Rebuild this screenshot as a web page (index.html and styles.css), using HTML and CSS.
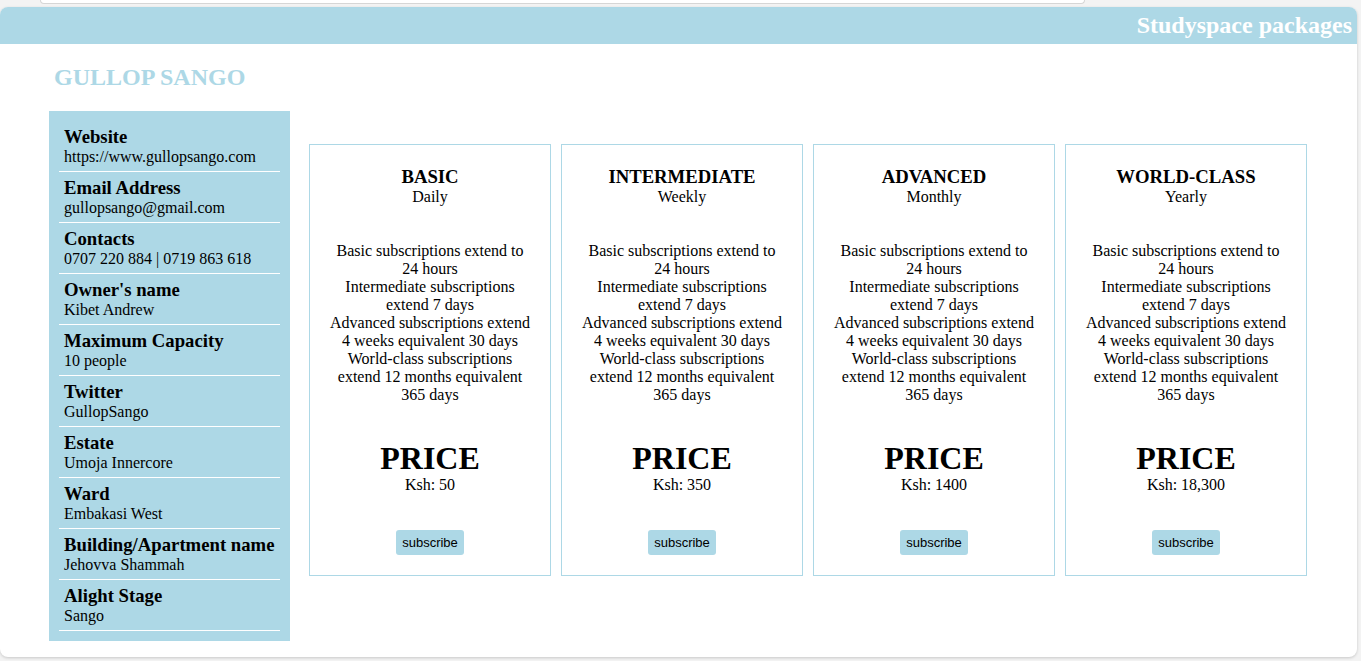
FILE: index.html
```html
<!DOCTYPE html>
<html>
<head>
<meta charset="utf-8">
<title>Studyspace packages</title>
<link rel="stylesheet" href="styles.css">
</head>
<body>
<div class="topstrip"></div>
<div class="panel">
  <header class="bar"><h1 class="bar-title">Studyspace packages</h1></header>
  <div class="content">
    <h2 class="brand">GULLOP SANGO</h2>
    <div class="row">
      <aside class="sidebar">
        <div class="item"><h3>Website</h3><p>https://www.gullopsango.com</p></div>
        <div class="item"><h3>Email Address</h3><p>gullopsango@gmail.com</p></div>
        <div class="item"><h3>Contacts</h3><p>0707 220 884 | 0719 863 618</p></div>
        <div class="item"><h3>Owner's name</h3><p>Kibet Andrew</p></div>
        <div class="item"><h3>Maximum Capacity</h3><p>10 people</p></div>
        <div class="item"><h3>Twitter</h3><p>GullopSango</p></div>
        <div class="item"><h3>Estate</h3><p>Umoja Innercore</p></div>
        <div class="item"><h3>Ward</h3><p>Embakasi West</p></div>
        <div class="item"><h3>Building/Apartment name</h3><p>Jehovva Shammah</p></div>
        <div class="item"><h3>Alight Stage</h3><p>Sango</p></div>
      </aside>
      <section class="cards">
        <div class="card">
          <div class="head"><h3>BASIC</h3><p>Daily</p></div>
          <div class="desc">
            <p>Basic subscriptions extend to 24 hours</p>
            <p>Intermediate subscriptions extend 7 days</p>
            <p>Advanced subscriptions extend 4 weeks equivalent 30 days</p>
            <p>World-class subscriptions extend 12 months equivalent 365 days</p>
          </div>
          <div class="price"><h1>PRICE</h1><p>Ksh: 50</p></div>
          <button class="btn">subscribe</button>
        </div>
        <div class="card">
          <div class="head"><h3>INTERMEDIATE</h3><p>Weekly</p></div>
          <div class="desc">
            <p>Basic subscriptions extend to 24 hours</p>
            <p>Intermediate subscriptions extend 7 days</p>
            <p>Advanced subscriptions extend 4 weeks equivalent 30 days</p>
            <p>World-class subscriptions extend 12 months equivalent 365 days</p>
          </div>
          <div class="price"><h1>PRICE</h1><p>Ksh: 350</p></div>
          <button class="btn">subscribe</button>
        </div>
        <div class="card">
          <div class="head"><h3>ADVANCED</h3><p>Monthly</p></div>
          <div class="desc">
            <p>Basic subscriptions extend to 24 hours</p>
            <p>Intermediate subscriptions extend 7 days</p>
            <p>Advanced subscriptions extend 4 weeks equivalent 30 days</p>
            <p>World-class subscriptions extend 12 months equivalent 365 days</p>
          </div>
          <div class="price"><h1>PRICE</h1><p>Ksh: 1400</p></div>
          <button class="btn">subscribe</button>
        </div>
        <div class="card">
          <div class="head"><h3>WORLD-CLASS</h3><p>Yearly</p></div>
          <div class="desc">
            <p>Basic subscriptions extend to 24 hours</p>
            <p>Intermediate subscriptions extend 7 days</p>
            <p>Advanced subscriptions extend 4 weeks equivalent 30 days</p>
            <p>World-class subscriptions extend 12 months equivalent 365 days</p>
          </div>
          <div class="price"><h1>PRICE</h1><p>Ksh: 18,300</p></div>
          <button class="btn">subscribe</button>
        </div>
      </section>
    </div>
  </div>
</div>
</body>
</html>
```
FILE: styles.css
```css
html, body {
  margin: 0;
  padding: 0;
}
body {
  background: #f3f3f3;
  font-family: "Liberation Serif", "Times New Roman", serif;
  font-size: 16px;
  color: #000;
  height: 661px;
  overflow: hidden;
}
h1, h2, h3, p {
  margin: 0;
}
.topstrip {
  height: 3px;
  width: 1043px;
  margin-left: 40px;
  background: #fff;
  border: 1px solid #d6d6d6;
  border-top: none;
  border-radius: 0 0 8px 8px;
}
.panel {
  margin-top: 3px;
  width: 1357px;
  height: 650px;
  background: #fff;
  border-radius: 8px;
  box-shadow: 0 1px 3px rgba(0, 0, 0, 0.18);
  overflow: hidden;
}
.bar {
  height: 37px;
  background: #add8e6;
  display: flex;
  align-items: center;
  justify-content: flex-end;
  padding-right: 5px;
}
.bar-title {
  color: #fff;
  font-size: 24px;
  font-weight: bold;
}
.content {
  padding-left: 49px;
}
.brand {
  color: #add8e6;
  font-size: 24px;
  font-weight: bold;
  padding-left: 5px;
  margin-top: 19px;
  line-height: 28px;
}
.row {
  display: flex;
  align-items: flex-start;
  margin-top: 20px;
}
.sidebar {
  width: 221px;
  background: #add8e6;
  padding: 10px;
}
.item {
  padding: 5px 5px;
  border-bottom: 1px solid #fff;
  height: 40px;
}
.item h3 {
  font-size: 18.72px;
  line-height: 21.5px;
}
.item p {
  font-size: 16px;
  line-height: 18.5px;
}
.cards {
  display: flex;
  gap: 10px;
  margin-left: 19px;
  margin-top: 33px;
}
.card {
  width: 202px;
  border: 1px solid #add8e6;
  padding: 21px 19px 20px;
  text-align: center;
  display: flex;
  flex-direction: column;
  align-items: center;
}
.head h3 {
  font-size: 18.72px;
  line-height: 21.5px;
}
.head p {
  line-height: 18px;
}
.desc {
  margin-top: 36px;
  line-height: 18px;
}
.price {
  margin-top: 36px;
}
.price h1 {
  font-size: 32px;
  line-height: 36px;
}
.price p {
  line-height: 18px;
}
.btn {
  margin-top: 36px;
  background: #add8e6;
  border: none;
  border-radius: 3px;
  font-family: "Liberation Sans", Arial, sans-serif;
  font-size: 13px;
  padding: 5px 6px;
  color: #000;
  height: 25px;
}
```
